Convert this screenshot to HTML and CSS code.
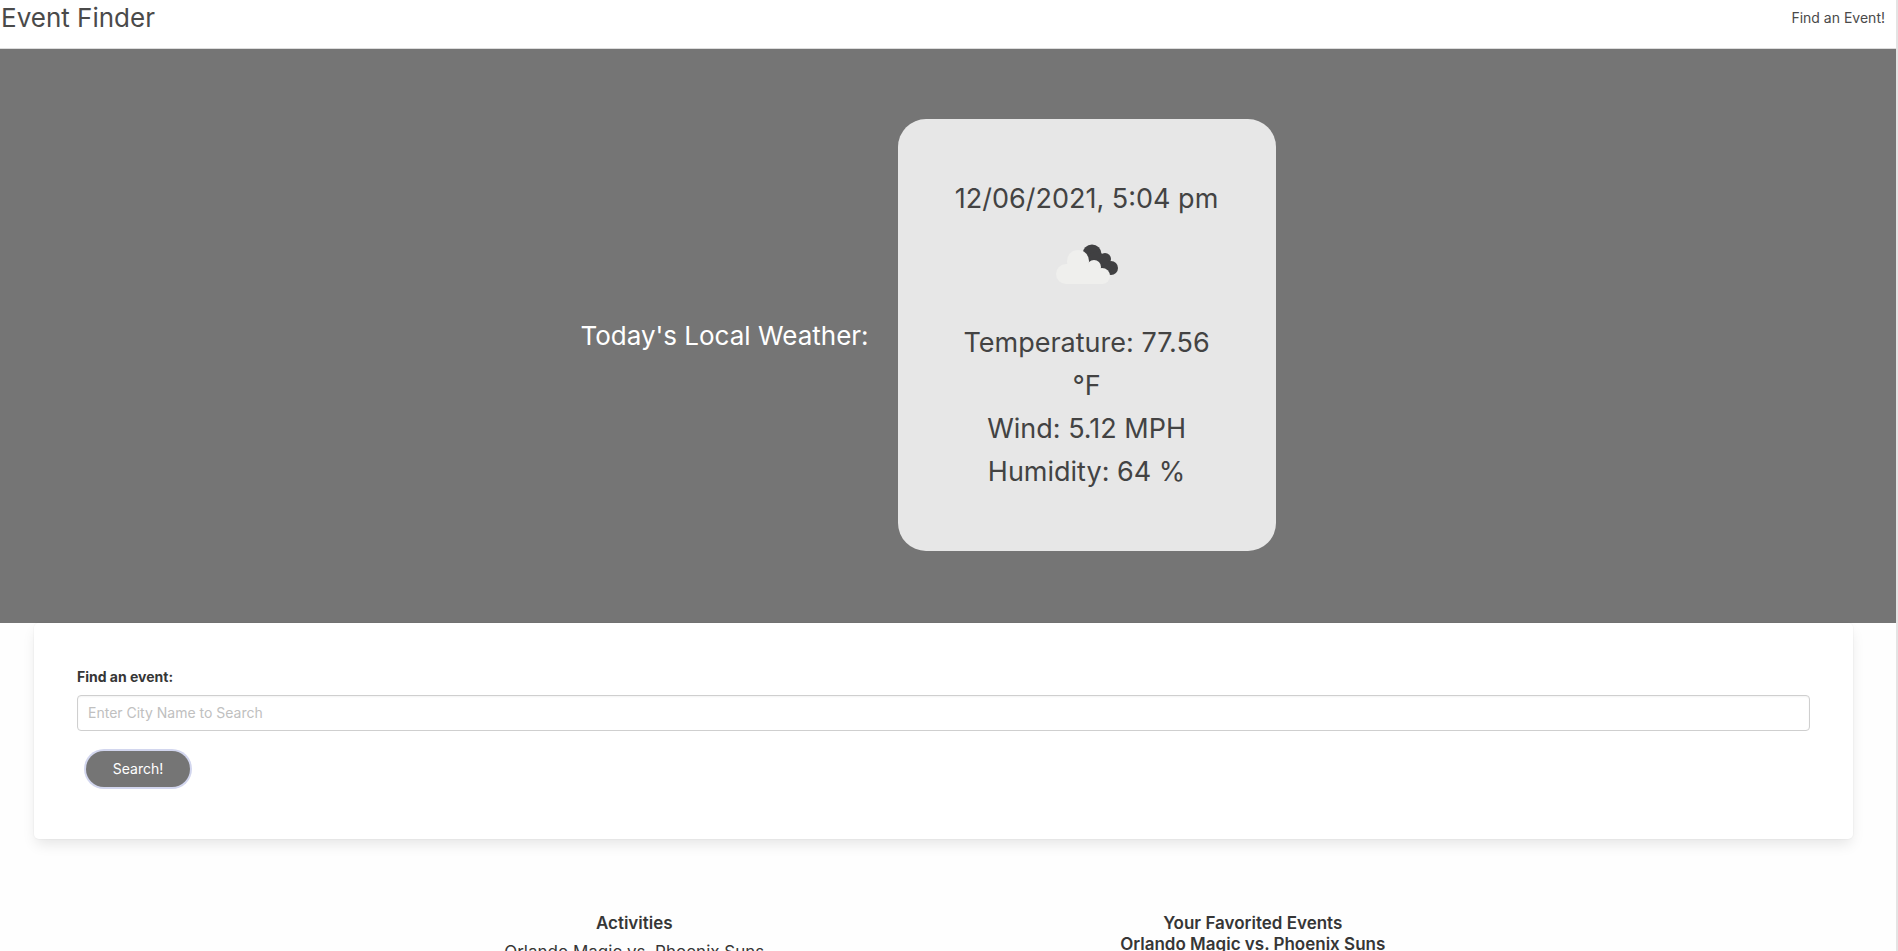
FILE: index.html
```html
<!DOCTYPE html>
<html lang="en">
<head>
<meta charset="utf-8">
<title>Event Finder</title>
<link rel="stylesheet" href="styles.css">
</head>
<body>
<header class="navbar">
  <h1 class="brand">Event Finder</h1>
  <a class="nav-link" href="#find">Find an Event!</a>
</header>
<main>
  <section class="hero">
    <h2 class="hero-title">Today's Local Weather:</h2>
    <div class="weather-card">
      <p>12/06/2021, 5:04 pm</p>
      <svg class="weather-icon" viewBox="0 0 90 90" role="img" aria-label="Broken clouds">
        <g fill="#404042">
          <circle cx="50" cy="32" r="9.500"/>
          <circle cx="63" cy="37" r="6"/>
          <circle cx="69" cy="46" r="7"/>
          <path d="M46 32L57 29L63 35L71 46L66 52L45 50Z"/>
        </g>
        <g fill="#efefed">
          <circle cx="24" cy="52" r="10"/>
          <circle cx="36" cy="39" r="11"/>
          <circle cx="52" cy="45" r="7"/>
          <circle cx="60" cy="54" r="8"/>
          <path d="M24 42H34L53 41L61 52V62H24Z"/>
        </g>
      </svg>
      <p>Temperature: 77.56 °F</p>
      <p>Wind: 5.12 MPH</p>
      <p>Humidity: 64 %</p>
    </div>
  </section>
  <form class="search-box" id="find">
    <label class="label" for="city">Find an event:</label>
    <input class="input" id="city" type="text" placeholder="Enter City Name to Search">
    <button class="button" type="button">Search!</button>
  </form>
  <section class="results">
    <div class="column">
      <h3 class="column-title">Activities</h3>
      <p class="activity">Orlando Magic vs. Phoenix Suns</p>
    </div>
    <div class="column">
      <h3 class="column-title">Your Favorited Events</h3>
      <p class="favorite">Orlando Magic vs. Phoenix Suns</p>
    </div>
  </section>
</main>
</body>
</html>
```
FILE: styles.css
```css
* {
  box-sizing: border-box;
  margin: 0;
}

body {
  height: 100vh;
  overflow: hidden;
  border-right: 2px solid #e4e4e4;
  background: #fefefe;
  color: #363636;
  font-family: Inter, "Liberation Sans", sans-serif;
  font-size: 14px;
  line-height: 21px;
}

.navbar {
  display: flex;
  justify-content: space-between;
  align-items: flex-start;
  height: 49px;
  padding: 0 11px 0 1px;
  border-bottom: 1px solid #dcdcdc;
  background: #fff;
  color: #4a4a4a;
}

.brand {
  font-size: 26px;
  font-weight: 400;
  line-height: 36px;
}

.nav-link {
  padding-top: 7px;
  color: inherit;
  text-decoration: none;
}

.hero {
  display: flex;
  justify-content: center;
  align-items: center;
  gap: 29px;
  padding: 70px 40px 72px 0;
  background: #757575;
  line-height: 43px;
}

.hero-title {
  color: #fff;
  font-size: 26px;
  font-weight: 400;
}

.weather-card {
  width: 378px;
  padding: 58px 54px;
  border-radius: 28px;
  background: #e7e7e7;
  color: #434343;
  font-size: 27px;
  text-align: center;
}

.weather-icon {
  display: block;
  width: 90px;
  height: 90px;
  margin: 2px auto 9px;
}

.search-box {
  margin: 0 43px 0 34px;
  padding: 43px 43px 52px;
  border-radius: 5px;
  background: #fff;
  box-shadow: 0 7px 14px -2px rgba(10, 10, 10, 0.1), 0 0 0 1px rgba(10, 10, 10, 0.02);
}

.label {
  display: block;
  margin-bottom: 8px;
  font-weight: 700;
}

.input {
  display: block;
  width: 100%;
  height: 36px;
  padding: 0 10px 2px;
  border: 1px solid #cfcfcf;
  border-radius: 4px;
  background: #fff;
  box-shadow: inset 0 1px 2px rgba(10, 10, 10, 0.05);
  color: inherit;
  font: inherit;
}

.input::placeholder {
  color: #c0c0c0;
  opacity: 1;
}

.button {
  display: block;
  width: 104px;
  height: 36px;
  margin: 20px 0 0 9px;
  padding: 0 0 2px;
  border: 0;
  border-radius: 18px;
  background: #757575;
  box-shadow: 0 0 0 2px #d2d6ee;
  color: #fff;
  font: inherit;
}

.results {
  display: grid;
  grid-template-columns: repeat(2, 34%);
  justify-content: center;
  margin: 74px 43px 0 34px;
  font-size: 17px;
  text-align: center;
}

.column-title {
  font-size: 17px;
  font-weight: 600;
  line-height: 21px;
}

.activity {
  padding-top: 8px;
}

.favorite {
  font-weight: 600;
}
```
